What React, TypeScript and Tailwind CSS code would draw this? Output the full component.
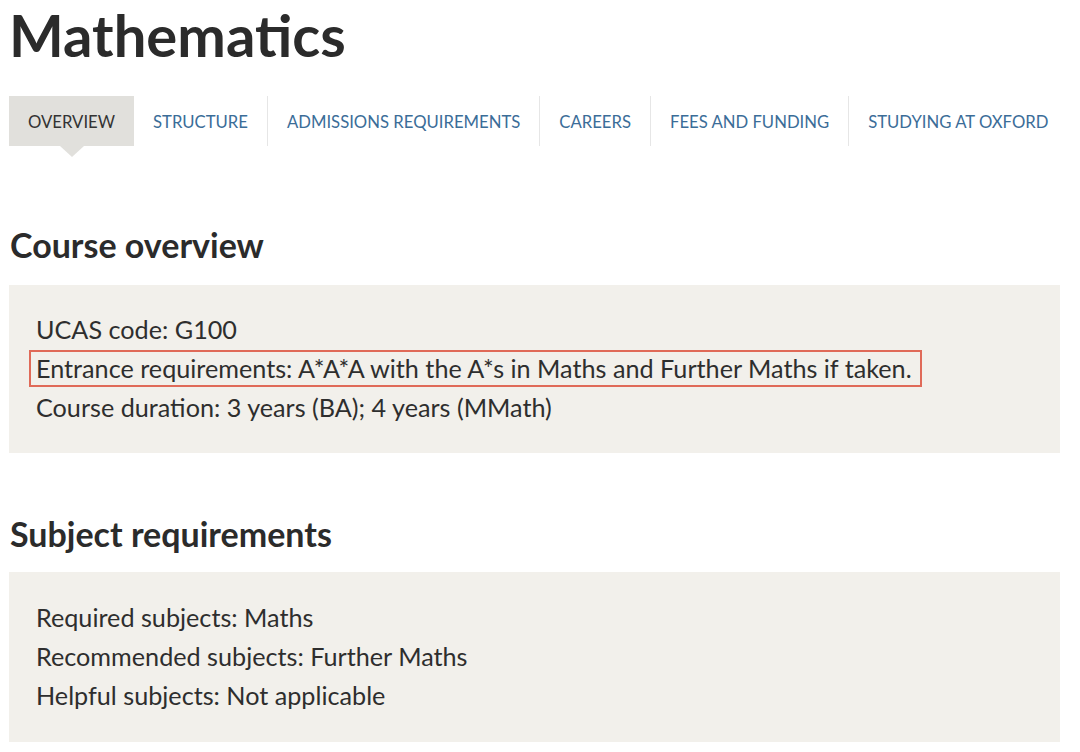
const tabs = [
  "OVERVIEW",
  "STRUCTURE",
  "ADMISSIONS REQUIREMENTS",
  "CAREERS",
  "FEES AND FUNDING",
  "STUDYING AT OXFORD",
];

export default function App() {
  return (
    <div className="min-h-[752px] w-[1080px] bg-white font-['Lato',sans-serif] text-[#2e2e2e]">
      <h1 className="pl-[9px] pt-[1px] text-[58px] font-bold leading-[68px] text-[#2b2b2b]">
        Mathematics
      </h1>

      {/* tabs */}
      <div className="mt-[27px] flex pl-[9px]">
        {tabs.map((t, i) => (
          <div
            key={t}
            className={
              i === 0
                ? "relative flex h-[50px] items-center whitespace-nowrap bg-[#e1e0dc] px-[19px] pt-[3px] text-[16.7px] text-[#333]"
                : i === 1
                ? "flex h-[50px] items-center whitespace-nowrap px-[19px] pt-[3px] text-[16.7px] text-[#3b6d98]"
                : "flex h-[50px] items-center whitespace-nowrap border-l border-[#e6e6e6] px-[19px] pt-[3px] text-[16.7px] text-[#3b6d98]"
            }
          >
            {t}
            {i === 0 && (
              <span className="absolute left-1/2 top-full -ml-[12px] h-0 w-0 border-x-[12px] border-t-[11px] border-x-transparent border-t-[#e1e0dc]" />
            )}
          </div>
        ))}
      </div>

      {/* course overview */}
      <h2 className="mt-[79px] pl-[10px] text-[34px] font-bold leading-[40px] text-[#2b2b2b]">
        Course overview
      </h2>
      <div className="mx-[9px] mt-[20px] w-[1051px] bg-[#f2f0eb] pb-[26px] pl-[27px] pt-[25px] text-[25.2px] leading-[39px]">
        <p>UCAS code: G100</p>
        <p className="my-[1px] -ml-[7px] w-fit border-2 border-[#e06a58] pl-[5px] pr-[8px] leading-[33px]">
          Entrance requirements: A*A*A with the A*s in Maths and Further Maths if taken.
        </p>
        <p>Course duration: 3 years (BA); 4 years (MMath)</p>
      </div>

      {/* subject requirements */}
      <h2 className="mt-[61px] pl-[10px] text-[34px] font-bold leading-[40px] text-[#2b2b2b]">
        Subject requirements
      </h2>
      <div className="mx-[9px] mt-[18px] w-[1051px] bg-[#f2f0eb] pb-[27px] pl-[27px] pt-[26px] text-[25.2px] leading-[39px]">
        <p>Required subjects: Maths</p>
        <p>Recommended subjects: Further Maths</p>
        <p>Helpful subjects: Not applicable</p>
      </div>
    </div>
  );
}
